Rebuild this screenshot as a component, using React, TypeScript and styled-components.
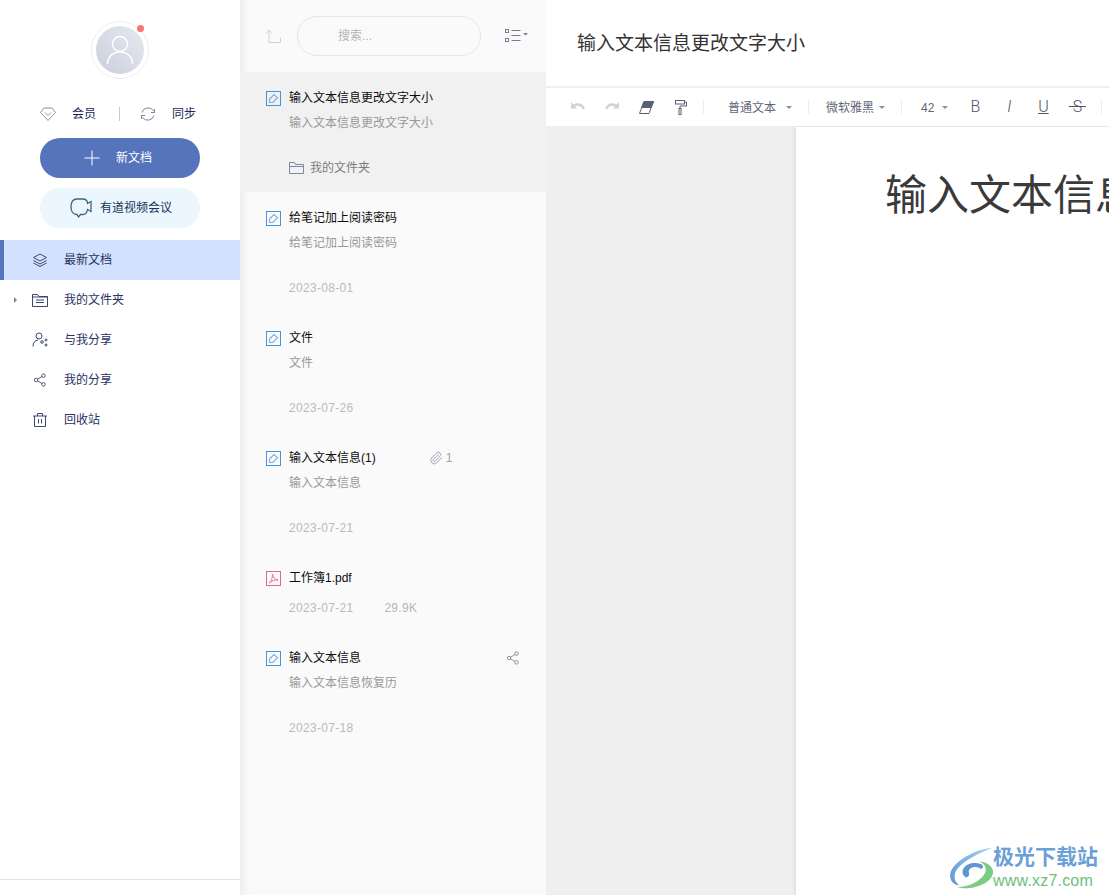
import { ReactNode } from 'react';
import styled, { createGlobalStyle } from 'styled-components';
import { Paperclip } from 'lucide-react';

const GlobalStyle = createGlobalStyle`
    html, body {
        margin: 0;
        padding: 0;
        background: #fff;
    }
    body {
        font-family: "Liberation Sans", "Noto Sans CJK SC", sans-serif;
        font-size: 12px;
        line-height: 16px;
    }
    * {
        box-sizing: border-box;
    }
`;

const Page = styled.div`
    position: relative;
    display: flex;
    width: 1109px;
    height: 895px;
    overflow: hidden;
`;

/* left nav */
const Sidebar = styled.aside`
    display: flex;
    flex-direction: column;
    align-items: center;
    flex: 0 0 240px;
    height: 880px;
    padding-top: 21px;
    border-bottom: 1px solid #e4e4e4;
`;

const AvatarRing = styled.div`
    position: relative;
    display: flex;
    align-items: center;
    justify-content: center;
    width: 58px;
    height: 58px;
    border: 1px solid #edeef4;
    border-radius: 50%;
`;

const AvatarFace = styled.div`
    display: flex;
    align-items: center;
    justify-content: center;
    width: 48px;
    height: 48px;
    border-radius: 50%;
    background: linear-gradient(225deg, #e6e9f0, #c9cfdc);
`;

const Dot = styled.span`
    position: absolute;
    top: 3px;
    right: 4px;
    width: 7px;
    height: 7px;
    border-radius: 50%;
    background: #f97674;
`;

const VipRow = styled.div`
    display: flex;
    align-items: center;
    width: 160px;
    height: 20px;
    margin-top: 25px;
    color: #1c2559;
`;

const VipIcon = styled.span<{ $gap: number }>`
    display: flex;
    margin-right: ${p => p.$gap}px;
`;

const VipDivider = styled.span`
    width: 1px;
    height: 14px;
    margin: 0 20px 0 23px;
    background: #c9c9c9;
`;

const NewButton = styled.div`
    display: flex;
    align-items: center;
    justify-content: center;
    gap: 16px;
    width: 160px;
    height: 40px;
    margin-top: 14px;
    padding-right: 4px;
    border-radius: 20px;
    background: #5674bb;
    color: #fff;
`;

const MeetingButton = styled.div`
    display: flex;
    align-items: center;
    justify-content: center;
    gap: 8px;
    width: 160px;
    height: 40px;
    margin-top: 10px;
    padding-left: 2px;
    border-radius: 20px;
    background: #ebf6fd;
    color: #15335a;
`;

const Nav = styled.nav`
    align-self: stretch;
    margin-top: 12px;
`;

const NavRow = styled.div<{ $active?: boolean }>`
    position: relative;
    display: flex;
    align-items: center;
    height: 40px;
    padding-left: ${p => (p.$active ? 28 : 32)}px;
    border-left: ${p => (p.$active ? '4px solid #5674bb' : 'none')};
    background: ${p => (p.$active ? '#d2e1fd' : 'transparent')};
    color: #29315f;
`;

const NavIcon = styled.span`
    display: flex;
    justify-content: center;
    width: 16px;
    margin-right: 16px;
`;

const Caret = styled.span`
    position: absolute;
    left: 14px;
    top: 17px;
    width: 0;
    height: 0;
    border-left: 3px solid #7b8199;
    border-top: 3px solid transparent;
    border-bottom: 3px solid transparent;
`;

/* note list */
const ListPane = styled.section`
    flex: 0 0 306px;
    height: 100%;
    background: linear-gradient(90deg, #efefef 0, #f8f8f8 7px, #fafafa 12px);
`;

const ListTop = styled.div`
    display: flex;
    align-items: center;
    height: 72px;
    padding-left: 25px;
`;

const SearchBox = styled.div`
    display: flex;
    align-items: center;
    width: 184px;
    height: 40px;
    margin-left: 16px;
    padding-left: 40px;
    border: 1px solid #e6e6e6;
    border-radius: 20px;
    color: #b5b5b5;
`;

const ViewSwitch = styled.span`
    display: flex;
    margin-left: 24px;
`;

const Item = styled.article<{ $active?: boolean; $short?: boolean }>`
    display: flex;
    flex-direction: column;
    height: ${p => (p.$short ? 80 : 120)}px;
    padding: 17px 0 0 26px;
    background: ${p => (p.$active ? '#f1f1f1' : 'transparent')};
`;

const ItemHead = styled.div`
    display: flex;
    align-items: center;
    height: 18px;
    color: #0c0c0c;
`;

const ItemIcon = styled.span`
    display: flex;
    margin-right: 8px;
`;

const ItemTitle = styled.span`
    flex: 0 0 auto;
`;

const AttachSlot = styled.span`
    display: flex;
    align-items: center;
    gap: 3px;
    margin-left: 53px;
    color: #a89f97;
    font-size: 12px;
`;

const ShareSlot = styled.span`
    display: flex;
    margin-left: 145px;
`;

const Preview = styled.div`
    height: 18px;
    margin-top: 8px;
    padding-left: 23px;
    color: #999;
`;

const MetaRow = styled.div<{ $top: number }>`
    display: flex;
    align-items: center;
    gap: 6px;
    height: 18px;
    margin-top: ${p => p.$top}px;
    padding-left: 23px;
    color: #bbb;
    letter-spacing: 0.3px;
`;

const FolderLabel = styled.span`
    color: #7c7c7c;
    letter-spacing: 0;
`;

const Size = styled.span`
    margin-left: 25px;
    color: #bdb5ae;
`;

/* editor */
const Main = styled.main`
    display: flex;
    flex-direction: column;
    flex: 1;
    min-width: 0;
    height: 100%;
`;

const TitleBar = styled.div`
    display: flex;
    align-items: center;
    height: 88px;
    padding: 2px 0 0 31px;
    border-bottom: 2px solid #efefef;
    color: #333;
    font-size: 19px;
    line-height: 26px;
`;

const Toolbar = styled.div`
    display: flex;
    align-items: center;
    height: 38px;
    padding-left: 24px;
    color: #5f6577;
    white-space: nowrap;
`;

const ToolIcon = styled.span<{ $gap?: number }>`
    display: flex;
    margin-right: ${p => p.$gap ?? 0}px;
`;

const ToolSep = styled.span<{ $left: number; $right: number }>`
    flex: 0 0 1px;
    height: 14px;
    margin: 0 ${p => p.$right}px 0 ${p => p.$left}px;
    background: #ececec;
`;

const Select = styled.span<{ $gap: number }>`
    display: flex;
    align-items: center;
    gap: ${p => p.$gap}px;
    padding-top: 2px;
`;

const SelectCaret = styled.span`
    width: 0;
    height: 0;
    margin-top: -2px;
    border-top: 3px solid #8c8f9b;
    border-left: 3px solid transparent;
    border-right: 3px solid transparent;
`;

const FormatRow = styled.div`
    display: flex;
    margin-left: 10px;
`;

const FormatLetter = styled.span<{ $italic?: boolean; $under?: boolean; $strike?: boolean }>`
    width: 34px;
    color: #4f5568;
    font-family: Roboto, "Liberation Sans", sans-serif;
    font-size: 16px;
    font-weight: 300;
    font-style: ${p => (p.$italic ? 'italic' : 'normal')};
    line-height: 18px;
    text-align: center;
    text-decoration: ${p => (p.$under ? 'underline' : p.$strike ? 'line-through' : 'none')};
`;

const EditorArea = styled.div`
    display: flex;
    flex: 1;
    background: #efefef;
    border-top: 1px solid #ededed;
`;

const Sheet = styled.div`
    flex: 0 0 auto;
    width: 313px;
    margin-left: 250px;
    padding: 35px 0 0 89px;
    overflow: hidden;
    background: #fff;
    box-shadow: -2px 0 3px rgba(0, 0, 0, 0.06);
`;

const Heading = styled.h1`
    margin: 0;
    color: #3a3a3a;
    font-family: "Noto Sans CJK SC", sans-serif;
    font-size: 42px;
    font-weight: 400;
    line-height: 60px;
    white-space: nowrap;
`;

/* watermark */
const Watermark = styled.div`
    position: absolute;
    right: 11px;
    bottom: 6px;
    display: flex;
    align-items: flex-end;
`;

const MarkText = styled.div`
    display: flex;
    flex-direction: column;
    gap: 6px;
`;

const MarkName = styled.span`
    color: #6a9fd8;
    font-family: "Noto Sans CJK SC", sans-serif;
    font-size: 21px;
    font-weight: 700;
    line-height: 24px;
`;

const MarkUrl = styled.span`
    color: #6cc07a;
    font-family: "Liberation Sans", sans-serif;
    font-size: 16px;
    letter-spacing: 0.2px;
    line-height: 16px;
`;

const Stroke = ({ size = 16, color = '#3d4570', children, w = 1 }: { size?: number; color?: string; children: ReactNode; w?: number }) => (
    <svg width={size} height={size} viewBox="0 0 16 16" fill="none" stroke={color} strokeWidth={w}>
        {children}
    </svg>
);

const NoteIcon = () => (
    <svg width="15" height="15" viewBox="0 0 15 15" fill="none" stroke="#4a94d6">
        <rect x="0.5" y="0.5" width="14" height="14" />
        <path d="M3.500 11.500V8l4.500-4.500 3.500 3L7 11.500z" stroke="#7db3e3" strokeWidth="1.2" />
    </svg>
);

const PdfIcon = () => (
    <svg width="15" height="15" viewBox="0 0 15 15" fill="none" stroke="#dc6a82">
        <rect x="0.5" y="0.5" width="14" height="14" />
        <path d="M3 12c2.500-1.500 3.500-5 3.500-9 .5 3.500 2.500 5.500 5.500 6-3.500-.2-6 .8-9 3z" stroke="#e0788e" />
    </svg>
);

const ShareIcon = ({ color = '#3d4570' }: { color?: string }) => (
    <Stroke size={14} color={color}>
        <circle cx="3.500" cy="8" r="2" />
        <circle cx="12" cy="3" r="2" />
        <circle cx="12" cy="13" r="2" />
        <path d="M5.300 7l5-3M5.300 9l5 3" />
    </Stroke>
);

type Note = {
    title: string;
    preview?: string;
    date?: string;
    folder?: string;
    size?: string;
    kind?: 'note' | 'pdf';
    attach?: boolean;
    share?: boolean;
};

const notes: Note[] = [
    { title: '输入文本信息更改文字大小', preview: '输入文本信息更改文字大小', folder: '我的文件夹' },
    { title: '给笔记加上阅读密码', preview: '给笔记加上阅读密码', date: '2023-08-01' },
    { title: '文件', preview: '文件', date: '2023-07-26' },
    { title: '输入文本信息(1)', preview: '输入文本信息', date: '2023-07-21', attach: true },
    { title: '工作簿1.pdf', date: '2023-07-21', size: '29.9K', kind: 'pdf' },
    { title: '输入文本信息', preview: '输入文本信息恢复历', date: '2023-07-18', share: true }
];

const navItems: { label: string; icon: ReactNode; caret?: boolean; active?: boolean }[] = [
    {
        label: '最新文档',
        active: true,
        icon: (
            <Stroke>
                <path d="M8 2l6.500 3.500L8 9 1.500 5.500z" />
                <path d="M1.500 8.500L8 12l6.500-3.500M1.500 11L8 14.500 14.500 11" />
            </Stroke>
        )
    },
    {
        label: '我的文件夹',
        caret: true,
        icon: (
            <Stroke>
                <path d="M.5 14.500v-12h5l1.500 2h8.500v10z" />
                <path d="M.5 5h15M4 8h8M4 10.500h8" />
            </Stroke>
        )
    },
    {
        label: '与我分享',
        icon: (
            <Stroke>
                <circle cx="7" cy="4" r="3" />
                <path d="M1 14.500c0-4 2-6 5-6.500" />
                <circle cx="10" cy="10" r="1.300" />
                <circle cx="14" cy="8" r="1" />
                <circle cx="14" cy="13" r="1" />
            </Stroke>
        )
    },
    { label: '我的分享', icon: <ShareIcon /> },
    {
        label: '回收站',
        icon: (
            <Stroke>
                <path d="M1 4h14M5.500 4V1.500h5V4M2.500 4v10.500h11V4M6.500 7v4.500M9.500 7v4.500" />
            </Stroke>
        )
    }
];

const metaGap = (note: Note) => {
    if (note.kind === 'pdf') return 12;
    return 26;
};

const NoteItem = ({ note, active }: { note: Note; active: boolean }) => (
    <Item $active={active} $short={note.kind === 'pdf'}>
        <ItemHead>
            <ItemIcon>{note.kind === 'pdf' ? <PdfIcon /> : <NoteIcon />}</ItemIcon>
            <ItemTitle>{note.title}</ItemTitle>
            {note.attach && (
                <AttachSlot>
                    <Paperclip size={14} color="#8d92ab" strokeWidth={1.4} />1
                </AttachSlot>
            )}
            {note.share && (
                <ShareSlot>
                    <ShareIcon color="#7f84a0" />
                </ShareSlot>
            )}
        </ItemHead>
        {note.preview && <Preview>{note.preview}</Preview>}
        <MetaRow $top={metaGap(note)}>
            {note.folder ? (
                <>
                    <svg width="15" height="12" viewBox="0 0 15 12" fill="none" stroke="#8087a0">
                        <path d="M.5 11.500V.5h5l1 2h8v9zM.5 4.500h14" />
                    </svg>
                    <FolderLabel>{note.folder}</FolderLabel>
                </>
            ) : (
                note.date
            )}
            {note.size && <Size>{note.size}</Size>}
        </MetaRow>
    </Item>
);

export default function App() {
    return (
        <Page>
            <GlobalStyle />
            <Sidebar>
                <AvatarRing>
                    <AvatarFace>
                        <svg width="28" height="30" viewBox="0 0 28 30" fill="none" stroke="#fff" strokeWidth="1.500">
                            <circle cx="14" cy="9" r="7.500" />
                            <path d="M1.500 29c0-7 5-12 12.500-12s12.500 5 12.500 12" />
                        </svg>
                    </AvatarFace>
                    <Dot />
                </AvatarRing>
                <VipRow>
                    <VipIcon $gap={16}>
                        <Stroke color="#8a8fa8">
                            <path d="M4 2h8l3.500 4.500L8 14.500.5 6.500z" />
                            <path d="M5 6.500l3 3 3-3" />
                        </Stroke>
                    </VipIcon>
                    会员
                    <VipDivider />
                    <VipIcon $gap={16}>
                        <Stroke color="#7b809b">
                            <path d="M2 6.500A6.500 6.500 0 0 1 13.500 4.500M14 9.500A6.500 6.500 0 0 1 2.500 11.500" />
                            <path d="M14.500 3v3.500H11M1.500 13V9.500H5" />
                        </Stroke>
                    </VipIcon>
                    同步
                </VipRow>
                <NewButton>
                    <Stroke color="#fff">
                        <path d="M8 .5v15M.5 8h15" />
                    </Stroke>
                    新文档
                </NewButton>
                <MeetingButton>
                    <svg width="22" height="20" viewBox="0 0 22 20" fill="none" stroke="#3c6780" strokeWidth="1.300">
                        <path d="M7 1h6c2.500 0 4 1.500 4.500 3.500v1L21 3.500v10l-3.500-2c-.5 3-2 5-4.500 5h-2.500L8.500 19 7 16.500c-4 0-6-3-6-7.500S3 1 7 1z" />
                    </svg>
                    有道视频会议
                </MeetingButton>
                <Nav>
                    {navItems.map(item => (
                        <NavRow key={item.label} $active={item.active}>
                            {item.caret && <Caret />}
                            <NavIcon>{item.icon}</NavIcon>
                            {item.label}
                        </NavRow>
                    ))}
                </Nav>
            </Sidebar>

            <ListPane>
                <ListTop>
                    <svg width="16" height="15" viewBox="0 0 16 15" fill="none" stroke="#d0d0d0">
                        <path d="M1 4.500L4 1l3 3.500M4 1v12.500h11.500V9" />
                    </svg>
                    <SearchBox>搜索...</SearchBox>
                    <ViewSwitch>
                        <svg width="23" height="14" viewBox="0 0 23 14" fill="none" stroke="#777b96">
                            <rect x="0.500" y="0.500" width="3" height="3" />
                            <rect x="0.500" y="9.500" width="3" height="3" />
                            <path d="M6.500 1.500h9M6.500 6.500h9M6.500 11.500h9" />
                            <path d="M18 4h5l-2.500 2.500z" fill="#777b96" stroke="none" />
                        </svg>
                    </ViewSwitch>
                </ListTop>
                {notes.map((note, i) => (
                    <NoteItem key={note.title} note={note} active={i === 0} />
                ))}
            </ListPane>

            <Main>
                <TitleBar>输入文本信息更改文字大小</TitleBar>
                <Toolbar>
                    <ToolIcon $gap={18}>
                        <svg width="16" height="12" viewBox="0 0 16 12" fill="#d2d2d2">
                            <path d="M1 1v6.500h6L5 5.500c3-1.500 6-.5 8 3l2-1C13 2.500 8 1 3.500 3.500z" />
                        </svg>
                    </ToolIcon>
                    <ToolIcon $gap={19}>
                        <svg width="16" height="12" viewBox="0 0 16 12" fill="#d2d2d2">
                            <path d="M15 1v6.500H9L11 5.500c-3-1.500-6-.5-8 3l-2-1C3 2.500 8 1 12.500 3.500z" />
                        </svg>
                    </ToolIcon>
                    <ToolIcon $gap={20}>
                        <svg width="15" height="13" viewBox="0 0 15 13" fill="none" stroke="#5a6075">
                            <path d="M5 .5h9.500L10 12.500H.5z" />
                            <path d="M5 .5h9.500L12 6.500H2.700z" fill="#5a6075" />
                        </svg>
                    </ToolIcon>
                    <ToolIcon>
                        <svg width="13" height="15" viewBox="0 0 13 15" fill="none" stroke="#5a6075">
                            <rect x="1.500" y="0.500" width="9" height="3.500" />
                            <path d="M10.500 2h2v4H6v2.500" />
                            <rect x="5" y="8.500" width="2" height="6" />
                        </svg>
                    </ToolIcon>
                    <ToolSep $left={16} $right={24} />
                    <Select $gap={10}>
                        普通文本
                        <SelectCaret />
                    </Select>
                    <ToolSep $left={16} $right={17} />
                    <Select $gap={5}>
                        微软雅黑
                        <SelectCaret />
                    </Select>
                    <ToolSep $left={16} $right={19} />
                    <Select $gap={8}>
                        42
                        <SelectCaret />
                    </Select>
                    <FormatRow>
                        <FormatLetter>B</FormatLetter>
                        <FormatLetter $italic>I</FormatLetter>
                        <FormatLetter $under>U</FormatLetter>
                        <FormatLetter $strike>{'\u00a0S\u00a0'}</FormatLetter>
                    </FormatRow>
                    <ToolSep $left={7} $right={0} />
                </Toolbar>
                <EditorArea>
                    <Sheet>
                        <Heading>输入文本信息更改文字大小</Heading>
                    </Sheet>
                </EditorArea>
            </Main>

            <Watermark>
                <svg width="44" height="42" viewBox="0 0 44 42">
                    <defs>
                        <linearGradient id="markBlue" x1="1" y1="0" x2="0" y2="1">
                            <stop offset="0" stopColor="#9fd2f2" />
                            <stop offset="1" stopColor="#5f95d2" />
                        </linearGradient>
                    </defs>
                    <path d="M43 1C28 2 8 12 2 24c-3 8 2 14 8 14-6-4-6-12 0-18C18 12 30 6 43 1z" fill="url(#markBlue)" />
                    <path d="M16 30c-6-6 0-14 10-14 8 0 10 4 6 6-4-4-14-2-12 4 1 3-2 5-4 4z" fill="#5f95d2" />
                    <path d="M8 40c12 4 34-2 36-14 1-6-6-11-14-12 6 3 8 7 6 12-4 8-16 14-28 14z" fill="#7ccb82" />
                </svg>
                <MarkText>
                    <MarkName>极光下载站</MarkName>
                    <MarkUrl>www.xz7.com</MarkUrl>
                </MarkText>
            </Watermark>
        </Page>
    );
}
